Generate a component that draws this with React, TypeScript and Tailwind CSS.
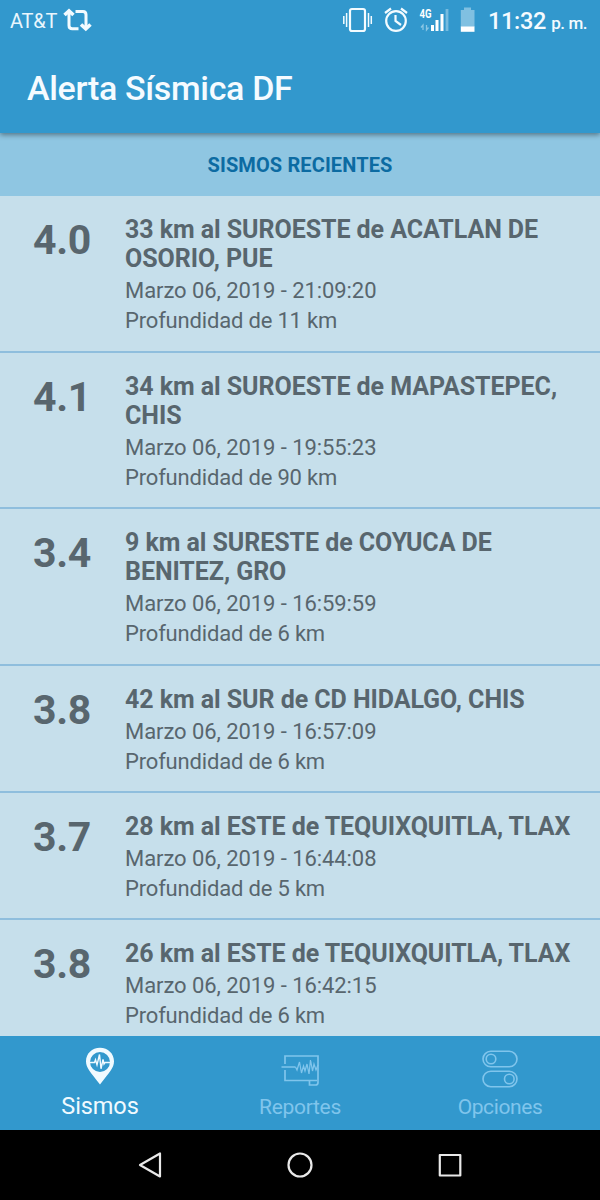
import React from "react";

type Quake = { magnitude: string; place: string[]; date: string; depth: string };

const quakes: Quake[] = [
  { magnitude: "4.0", place: ["33 km al SUROESTE de ACATLAN DE", "OSORIO, PUE"], date: "Marzo 06, 2019 - 21:09:20", depth: "11 km" },
  { magnitude: "4.1", place: ["34 km al SUROESTE de MAPASTEPEC,", "CHIS"], date: "Marzo 06, 2019 - 19:55:23", depth: "90 km" },
  { magnitude: "3.4", place: ["9 km al SURESTE de COYUCA DE", "BENITEZ, GRO"], date: "Marzo 06, 2019 - 16:59:59", depth: "6 km" },
  { magnitude: "3.8", place: ["42 km al SUR de CD HIDALGO, CHIS"], date: "Marzo 06, 2019 - 16:57:09", depth: "6 km" },
  { magnitude: "3.7", place: ["28 km al ESTE de TEQUIXQUITLA, TLAX"], date: "Marzo 06, 2019 - 16:44:08", depth: "5 km" },
  { magnitude: "3.8", place: ["26 km al ESTE de TEQUIXQUITLA, TLAX"], date: "Marzo 06, 2019 - 16:42:15", depth: "6 km" },
];

function StatusBar() {
  return (
    <div className="flex h-[42px] items-start pl-[10px]">
      <span className="w-[53px] whitespace-nowrap pt-[9px] text-[20px] leading-[24px] tracking-[-0.2px] text-[#e9f6fd]">AT&amp;T</span>
      <svg className="mt-[8px] h-[25px] w-[30px]" viewBox="0 0 30 25" fill="none" stroke="#f3fbff" strokeWidth="3">
        <path d="M6 5V17.5Q6 20.8 9.3 20.8H15.5M12.5 3.5H20Q23 3.5 23 6.8V19" />
        <path d="M1.5 7L6 3L10.5 7M18 16.5L22.8 20.8L27.5 16.5" strokeWidth="3.6" />
      </svg>
      <svg className="ml-[249px] h-[28px] w-[32px] translate-y-[6px]" viewBox="342 6 32 28" fill="none" stroke="#f3fbff">
        <rect x="350" y="9" width="15" height="22" rx="2" strokeWidth="2.2" />
        <path d="M346.6 13V27M343.8 16V24M368.5 13V27M371.3 16V24" strokeWidth="1.5" />
      </svg>
      <svg className="ml-[9px] h-[28px] w-[28px] translate-y-[6px]" viewBox="383 6 28 28" fill="none" stroke="#f3fbff">
        <circle cx="396" cy="21" r="9.8" strokeWidth="2.2" />
        <path d="M385 13L391 8.5M401 8.5L407 13M395.5 15V21L401 25" strokeWidth="2.2" />
      </svg>
      <svg className="ml-[8px] h-[28px] w-[32px] translate-y-[6px]" viewBox="419 6 32 28">
        <text x="419.5" y="17.8" fill="#fff" fontFamily="Roboto" fontSize="12.5" fontWeight="700" textLength="12" lengthAdjust="spacingAndGlyphs">4G</text>
        <path d="M432.5 25V31M437 20V31M442 14V31" stroke="#fff" strokeWidth="3" />
        <path d="M447 9V31" stroke="#76bbdf" strokeWidth="2.8" />
        <path d="M423 30V25L421 27.5M426.5 25V30L428.5 27.5" fill="none" stroke="#8bc6e4" strokeWidth="1.3" />
      </svg>
      <svg className="ml-[9px] h-[26px] w-[16px] translate-y-[7px]" viewBox="460 7 16 26">
        <path d="M464 7.5H471V10H474.5V27H460.8V10H464Z" fill="#80c0e1" />
        <path d="M460.8 26.5H474.5V31.8H460.8Z" fill="#fff" />
      </svg>
      <div className="ml-[12px] flex items-baseline whitespace-nowrap pt-[6px] font-medium leading-[30px] text-[#f5fbff]">
        <span className="text-[23.5px] tracking-[-0.3px]">11:32</span>
        <span className="ml-[5px] text-[17px] tracking-[-0.4px]">p. m.</span>
      </div>
    </div>
  );
}

function QuakeRow({ quake }: { quake: Quake }) {
  return (
    <li className="flex border-b-2 border-[#8fbedd] pb-[14.5px] pt-[19px] text-[#58666e]">
      <div className="w-[125px] pl-[33px] pt-[1px] text-[41px] font-bold leading-[48px] tracking-[-0.3px]">{quake.magnitude}</div>
      <div className="whitespace-nowrap">
        <h2 className="text-[25px] font-bold leading-[29.25px] tracking-[-0.06px]">
          {quake.place.map((line) => (
            <span key={line} className="block">{line}</span>
          ))}
        </h2>
        <p className="pt-[2.6px] text-[22px] leading-[30px] tracking-[-0.07px]">{quake.date}</p>
        <p className="text-[22px] leading-[30px] tracking-[-0.18px]">Profundidad de {quake.depth}</p>
      </div>
    </li>
  );
}

function BottomTabs() {
  return (
    <nav className="grid h-[94px] shrink-0 grid-cols-3 bg-[#3298cd] text-center">
      <div className="flex flex-col items-center pt-[11px] text-[#f0faff]">
        <svg className="h-[38px] w-[30px]" viewBox="0 0 30 38">
          <path fillRule="evenodd" d="M15 0.8C7 .8 1 6.7 1 14.2C1 21 5.5 25 15 37.5C24.5 25 29 21 29 14.2C29 6.7 23 .8 15 .8ZM15 5A10 10 0 1 1 15 25A10 10 0 1 1 15 5Z" fill="#f0faff" />
          <path d="M4.5 15.5H9.5L10.5 12.8L12 17.8L14.5 7.5L16 21.8L18 12.5L19 17L20 15.5H25.5" fill="none" stroke="#f0faff" strokeWidth="1.4" />
        </svg>
        <span className="mt-[7px] text-[23.5px] leading-[28px] tracking-[-0.1px]">Sismos</span>
      </div>
      <div className="flex flex-col items-center pt-[18px] text-[#80c5ec]">
        <svg className="h-[35px] w-[40px]" viewBox="280 1054 40 35" fill="none" stroke="#80c5ec" strokeWidth="1.7">
          <path d="M285 1064V1056H318V1082.5Q318 1085 315.5 1085H309.5V1080.5H285V1070M309.5 1080.5H317M281.5 1067H295.5" />
          <path d="M295.5 1067L297 1070L299.5 1062L301.5 1073L303.5 1066L305 1071L307 1064L309 1074L310.5 1060L312.5 1071L314 1064L316 1070L318 1065" strokeWidth="1.25" />
        </svg>
        <span className="mt-[4px] text-[21px] leading-[28px] tracking-[-0.3px]">Reportes</span>
      </div>
      <div className="flex flex-col items-center pt-[14px] text-[#80c5ec]">
        <svg className="h-[38px] w-[38px]" viewBox="0 0 38 38" fill="none" stroke="#80c5ec" strokeWidth="1.6">
          <rect x="2" y="1.3" width="34" height="15.5" rx="7.75" />
          <circle cx="10" cy="9" r="4.8" />
          <rect x="2" y="21.2" width="34" height="15.5" rx="7.75" />
          <circle cx="28.3" cy="29" r="4.8" />
        </svg>
        <span className="mt-[5px] text-[21px] leading-[28px] tracking-[-0.4px]">Opciones</span>
      </div>
    </nav>
  );
}

export default function App() {
  return (
    <div className="flex h-[1200px] w-[600px] flex-col overflow-hidden bg-[#c6dfeb] font-['Roboto',sans-serif]">
      <header className="z-10 h-[133px] shrink-0 bg-[#3298cd] shadow-[0_2px_5px_rgba(0,0,0,0.4)]">
        <StatusBar />
        <h1 className="pl-[27px] pt-[25px] text-[34px] font-medium leading-[42px] tracking-[-0.33px] text-[#f5fbff]">Alerta Sísmica DF</h1>
      </header>
      <div className="flex h-[63px] shrink-0 items-center justify-center bg-[#8fc6e2] text-[20px] font-bold tracking-[0.12px] text-[#0c6ba2]">SISMOS RECIENTES</div>
      <ul className="min-h-0 flex-1 overflow-hidden">
        {quakes.map((quake) => (
          <QuakeRow key={quake.date} quake={quake} />
        ))}
      </ul>
      <BottomTabs />
      <footer className="flex h-[70px] shrink-0 items-center justify-center bg-black">
        <svg className="h-[30px] w-[330px]" viewBox="135 1150 330 30" fill="none" stroke="#e9e9e9" strokeWidth="2.2" strokeLinejoin="round">
          <path d="M160 1153.5V1176.5L140 1165Z" />
          <circle cx="300" cy="1165" r="11.5" />
          <rect x="439.8" y="1155" width="20.5" height="20.5" />
        </svg>
      </footer>
    </div>
  );
}
